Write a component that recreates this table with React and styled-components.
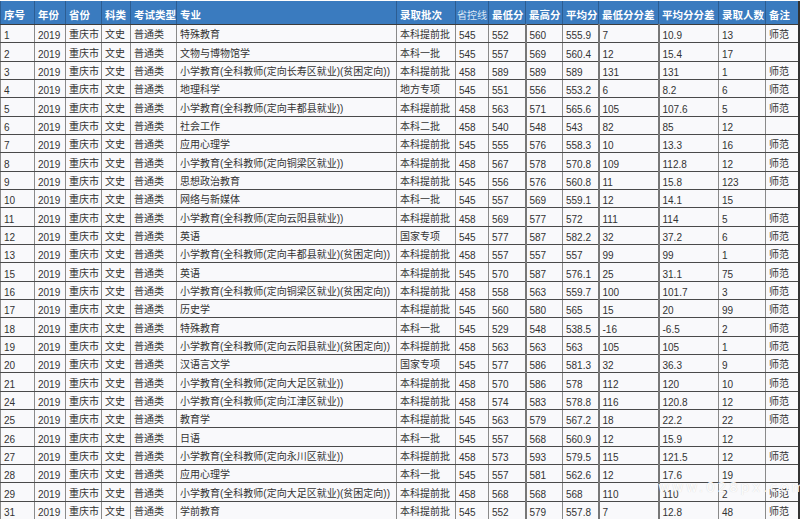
import React from "react";
import styled, { createGlobalStyle } from "styled-components";

const GlobalStyle = createGlobalStyle`
  html, body {
    margin: 0;
    padding: 0;
    background: #ffffff;
  }
  body {
    font-family: "Liberation Sans", "Noto Sans CJK SC", sans-serif;
  }
`;

const Sheet = styled.div`
  position: relative;
  width: 800px;
  height: 519px;
  overflow: hidden;
  background: #fdfdfd;
  padding-top: 1px;
  box-sizing: border-box;
`;

const Table = styled.table`
  width: 798px;
  table-layout: fixed;
  border-collapse: collapse;
  border-right: 2px solid #333;
  border-left: 1px solid #555;
`;

const HeadCell = styled.th`
  height: 21px;
  padding: 0 0 2px ${(p) => (p.$light ? "1px" : "3px")};
  background: #3a7bbf;
  color: ${(p) => (p.$light ? "#dce8f6" : "#ffffff")};
  font-weight: ${(p) => (p.$light ? 400 : 700)};
  font-size: ${(p) => (p.$light ? "10px" : "10.5px")};
  text-align: left;
  vertical-align: bottom;
  white-space: nowrap;
  overflow: hidden;
  border-left: 1px solid #2c5d92;
  border-bottom: 1px solid #3c3c3c;
`;

const Row = styled.tr`
  height: 18.33px;
  background: #f9f9fb;
`;

const Cell = styled.td`
  padding: 0 0 1px 3px;
  font-size: 10px;
  color: #333;
  vertical-align: bottom;
  white-space: nowrap;
  overflow: hidden;
  border-left: ${(p) => (p.$thick ? "2px solid #777" : "1px solid #8a8a8a")};
  border-bottom: 1px solid #4a4a4a;
`;

const Watermark = styled.div`
  position: absolute;
  left: 658px;
  top: 479px;
  font-family: "DejaVu Sans", sans-serif;
  font-size: 14px;
  letter-spacing: 2.6px;
  color: rgba(255, 255, 255, 0.95);
  text-shadow: 0 0 1px rgba(150, 150, 150, 0.4);
  pointer-events: none;
`;

const columns = [
  { title: "序号", width: 34 },
  { title: "年份", width: 31 },
  { title: "省份", width: 36 },
  { title: "科类", width: 29 },
  { title: "考试类型", width: 46 },
  { title: "专业", width: 220 },
  { title: "录取批次", width: 59 },
  { title: "省控线", width: 33, light: true },
  { title: "最低分", width: 37 },
  { title: "最高分", width: 37, thick: true },
  { title: "平均分", width: 36 },
  { title: "最低分分差", width: 60, thick: true },
  { title: "平均分分差", width: 60, thick: true },
  { title: "录取人数", width: 47 },
  { title: "备注", width: 33 },
];

const rows = [
  ["1", "特殊教育", "本科提前批", "545", "552", "560", "555.9", "7", "10.9", "13", "师范"],
  ["2", "文物与博物馆学", "本科一批", "545", "557", "569", "560.4", "12", "15.4", "17", ""],
  ["3", "小学教育(全科教师(定向长寿区就业)(贫困定向))", "本科提前批", "458", "589", "589", "589", "131", "131", "1", "师范"],
  ["4", "地理科学", "地方专项", "545", "551", "556", "553.2", "6", "8.2", "6", "师范"],
  ["5", "小学教育(全科教师(定向丰都县就业))", "本科提前批", "458", "563", "571", "565.6", "105", "107.6", "5", "师范"],
  ["6", "社会工作", "本科二批", "458", "540", "548", "543", "82", "85", "12", ""],
  ["7", "应用心理学", "本科提前批", "545", "555", "576", "558.3", "10", "13.3", "16", "师范"],
  ["8", "小学教育(全科教师(定向铜梁区就业))", "本科提前批", "458", "567", "578", "570.8", "109", "112.8", "12", "师范"],
  ["9", "思想政治教育", "本科提前批", "545", "556", "576", "560.8", "11", "15.8", "123", "师范"],
  ["10", "网络与新媒体", "本科一批", "545", "557", "569", "559.1", "12", "14.1", "15", ""],
  ["11", "小学教育(全科教师(定向云阳县就业))", "本科提前批", "458", "569", "577", "572", "111", "114", "5", "师范"],
  ["12", "英语", "国家专项", "545", "577", "587", "582.2", "32", "37.2", "6", "师范"],
  ["13", "小学教育(全科教师(定向丰都县就业)(贫困定向))", "本科提前批", "458", "557", "557", "557", "99", "99", "1", "师范"],
  ["15", "英语", "本科提前批", "545", "570", "587", "576.1", "25", "31.1", "75", "师范"],
  ["16", "小学教育(全科教师(定向铜梁区就业)(贫困定向))", "本科提前批", "458", "558", "563", "559.7", "100", "101.7", "3", "师范"],
  ["17", "历史学", "本科提前批", "545", "560", "580", "565", "15", "20", "99", "师范"],
  ["18", "特殊教育", "本科一批", "545", "529", "548", "538.5", "-16", "-6.5", "2", "师范"],
  ["19", "小学教育(全科教师(定向云阳县就业)(贫困定向))", "本科提前批", "458", "563", "563", "563", "105", "105", "1", "师范"],
  ["20", "汉语言文学", "国家专项", "545", "577", "586", "581.3", "32", "36.3", "9", "师范"],
  ["21", "小学教育(全科教师(定向大足区就业))", "本科提前批", "458", "570", "586", "578", "112", "120", "10", "师范"],
  ["24", "小学教育(全科教师(定向江津区就业))", "本科提前批", "458", "574", "583", "578.8", "116", "120.8", "12", "师范"],
  ["25", "教育学", "本科提前批", "545", "563", "579", "567.2", "18", "22.2", "22", "师范"],
  ["26", "日语", "本科一批", "545", "557", "568", "560.9", "12", "15.9", "12", ""],
  ["27", "小学教育(全科教师(定向永川区就业))", "本科提前批", "458", "573", "593", "579.5", "115", "121.5", "12", "师范"],
  ["28", "应用心理学", "本科一批", "545", "557", "581", "562.6", "12", "17.6", "19", ""],
  ["29", "小学教育(全科教师(定向大足区就业)(贫困定向))", "本科提前批", "458", "568", "568", "568", "110", "110", "2", "师范"],
  ["31", "学前教育", "本科提前批", "545", "552", "579", "557.8", "7", "12.8", "48", "师范"],
];

// every row shares year, province, subject and exam type
const expand = (r) => [r[0], "2019", "重庆市", "文史", "普通类", ...r.slice(1)];

export default function App() {
  return (
    <Sheet>
      <GlobalStyle />
      <Table>
        <colgroup>
          {columns.map((c) => (
            <col key={c.title} style={{ width: c.width }} />
          ))}
        </colgroup>
        <thead>
          <tr>
            {columns.map((c) => (
              <HeadCell key={c.title} $light={c.light}>
                {c.title}
              </HeadCell>
            ))}
          </tr>
        </thead>
        <tbody>
          {rows.map((r) => (
            <Row key={r[0]}>
              {expand(r).map((v, i) => (
                <Cell key={i} $thick={columns[i].thick}>
                  {v}
                </Cell>
              ))}
            </Row>
          ))}
        </tbody>
      </Table>
      <Watermark>www.028px.com</Watermark>
    </Sheet>
  );
}
